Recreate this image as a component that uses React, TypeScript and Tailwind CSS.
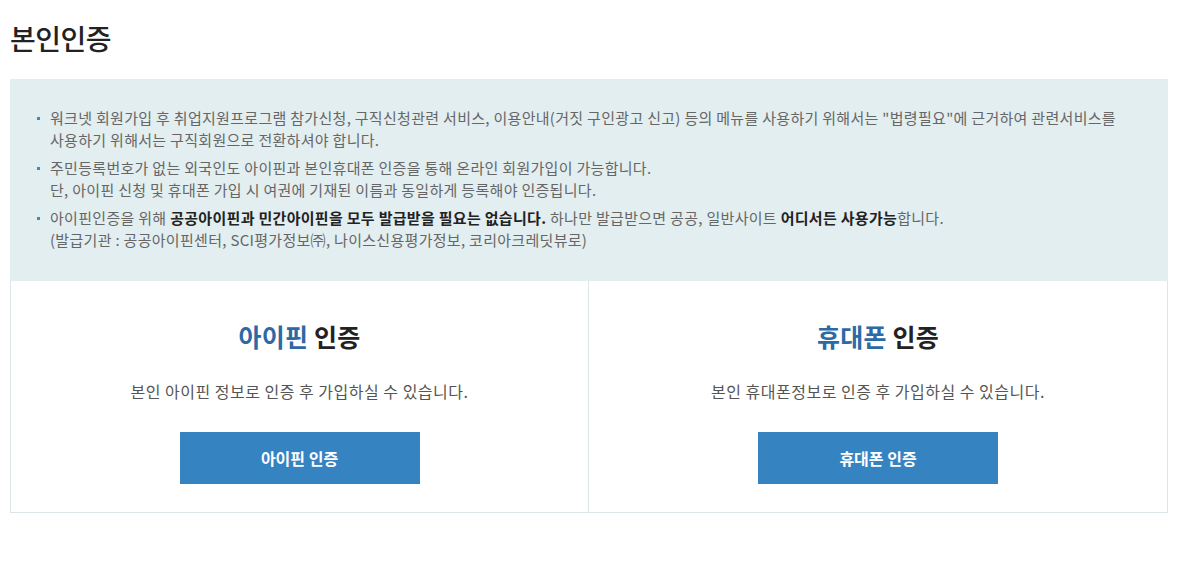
export default function App() {
  const font = { fontFamily: '"Noto Sans CJK KR", "Noto Sans", sans-serif' };
  return (
    <div className="bg-white w-[1188px] h-[563px] px-[10px] pt-[18px]" style={font}>
      <h1 className="text-[28px] leading-[40px] text-[#222] tracking-[-0.5px] font-medium">본인인증</h1>
      <div className="mt-[21px] w-[1158px]">
        <div className="bg-[#e3eef0] px-[26px] pt-[28px] pb-[30px] text-[15px] leading-[22px] text-[#666] tracking-[0.3px]">
          <ul className="flex flex-col gap-[6px]">
            <li className="relative pl-[14px]">
              <span className="absolute left-[1px] top-[10px] w-[3px] h-[3px] bg-[#3b8bc0]" />
              워크넷 회원가입 후 취업지원프로그램 참가신청, 구직신청관련 서비스, 이용안내(거짓 구인광고 신고) 등의 메뉴를 사용하기 위해서는 "법령필요"에 근거하여 관련서비스를
              <br />
              사용하기 위해서는 구직회원으로 전환하셔야 합니다.
            </li>
            <li className="relative pl-[14px]">
              <span className="absolute left-[1px] top-[10px] w-[3px] h-[3px] bg-[#3b8bc0]" />
              주민등록번호가 없는 외국인도 아이핀과 본인휴대폰 인증을 통해 온라인 회원가입이 가능합니다.
              <br />
              단, 아이핀 신청 및 휴대폰 가입 시 여권에 기재된 이름과 동일하게 등록해야 인증됩니다.
            </li>
            <li className="relative pl-[14px]">
              <span className="absolute left-[1px] top-[10px] w-[3px] h-[3px] bg-[#3b8bc0]" />
              아이핀인증을 위해 <b className="font-bold text-[#222]">공공아이핀과 민간아이핀을 모두 발급받을 필요는 없습니다.</b> 하나만 발급받으면 공공, 일반사이트{" "}
              <b className="font-bold text-[#222]">어디서든 사용가능</b>합니다.
              <br />
              (발급기관 : 공공아이핀센터, SCI평가정보㈜, 나이스신용평가정보, 코리아크레딧뷰로)
            </li>
          </ul>
        </div>
        <div className="grid grid-cols-2 border border-t-0 border-[#dce6e8] h-[232px]">
          {[
            { hl: "아이핀", desc: "본인 아이핀 정보로 인증 후 가입하실 수 있습니다.", btn: "아이핀 인증" },
            { hl: "휴대폰", desc: "본인 휴대폰정보로 인증 후 가입하실 수 있습니다.", btn: "휴대폰 인증" },
          ].map((c, i) => (
            <div key={i} className={`flex flex-col items-center pt-[38px] ${i === 0 ? "border-r border-[#dce6e8]" : ""}`}>
              <div className="text-[25px] leading-[34px] font-bold text-[#222] tracking-[0.2px]">
                <span className="text-[#2c6aa5]">{c.hl}</span> 인증
              </div>
              <p className="mt-[27px] text-[16px] leading-[22px] text-[#555] tracking-[0.5px]">{c.desc}</p>
              <button className="mt-[30px] w-[240px] h-[52px] bg-[#3683c2] text-white text-[16px] font-bold">{c.btn}</button>
            </div>
          ))}
        </div>
      </div>
    </div>
  );
}
